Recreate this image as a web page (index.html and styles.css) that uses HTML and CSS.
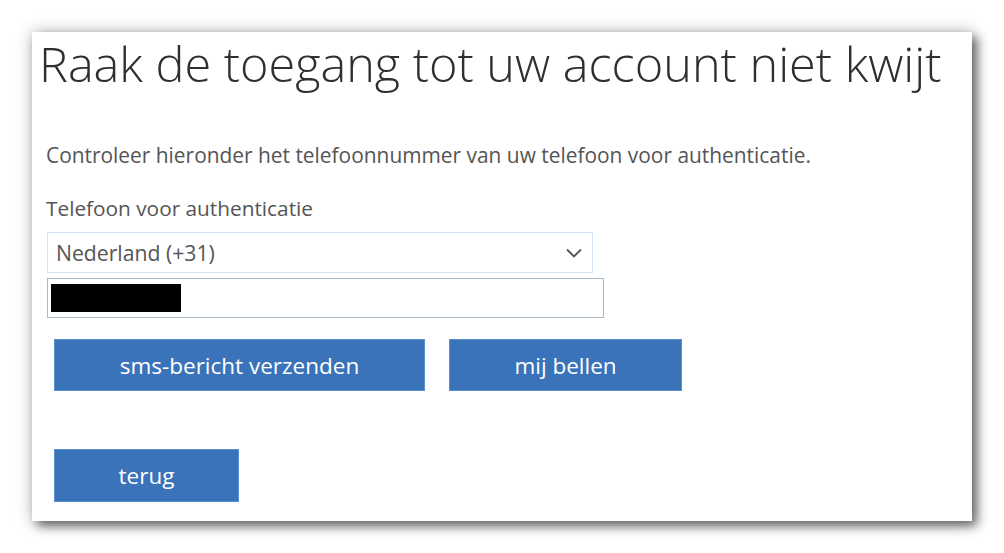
FILE: index.html
```html
<!DOCTYPE html>
<html lang="nl">
<head>
    <meta charset="UTF-8">
    <title>Raak de toegang tot uw account niet kwijt</title>
    <link rel="stylesheet" href="styles.css">
</head>
<body>
    <div class="card">
        <h1>Raak de toegang tot uw account niet kwijt</h1>
        <p class="intro">Controleer hieronder het telefoonnummer van uw telefoon voor authenticatie.</p>
        <label class="field-label" for="country">Telefoon voor authenticatie</label>
        <div class="select-box" id="country">
            <span>Nederland (+31)</span>
            <svg width="16" height="10" viewBox="0 0 16 10"><path d="M1 1.5 L8 8.5 L15 1.5" fill="none" stroke="#555" stroke-width="1.8"/></svg>
        </div>
        <div class="phone-input">
            <div class="redacted"></div>
        </div>
        <div class="actions">
            <button class="btn btn-sms">sms-bericht verzenden</button>
            <button class="btn btn-call">mij bellen</button>
        </div>
        <button class="btn btn-back">terug</button>
    </div>
</body>
</html>
```

FILE: styles.css
```css
body {
    margin: 0;
    min-height: 553px;
    background-color: #fff;
    font-family: "Open Sans", "Noto Sans", sans-serif;
}

.card {
    margin: 32px 0 0 32px;
    width: 940px;
    height: 489px;
    box-sizing: border-box;
    padding: 0 0 0 14px;
    background-color: #fff;
    box-shadow: 5px 5px 10px rgba(0, 0, 0, 0.55), 0 0 16px rgba(0, 0, 0, 0.25);
    display: flex;
    flex-direction: column;
    align-items: flex-start;
}

h1 {
    margin: 1px 0 0 -7px;
    font-weight: 300;
    font-size: 48.6px;
    line-height: 60px;
    color: #2f2f2f;
    white-space: nowrap;
}

.intro {
    margin: 49px 0 0 0;
    font-size: 20.9px;
    line-height: 26px;
    color: #555;
}

.field-label {
    margin-top: 27px;
    font-size: 20.8px;
    line-height: 26px;
    color: #555;
}

.select-box {
    margin: 11px 0 0 1px;
    width: 546px;
    height: 41px;
    box-sizing: border-box;
    border: 1px solid #d3e3f3;
    padding: 0 10px 0 8px;
    display: flex;
    align-items: center;
    justify-content: space-between;
    font-size: 21.2px;
    color: #555;
}

.phone-input {
    margin: 5px 0 0 1px;
    width: 557px;
    height: 40px;
    box-sizing: border-box;
    border: 1px solid #a8b9c9;
    padding: 5px 0 0 3px;
}

.redacted {
    width: 130px;
    height: 28px;
    background-color: #000;
}

.actions {
    margin: 21px 0 0 8px;
    display: flex;
    gap: 24px;
}

.btn {
    height: 52px;
    border: 1px solid #5b8fd0;
    background-color: #3a73ba;
    color: #fff;
    font-family: inherit;
    font-size: 22.5px;
    padding: 0;
}

.btn-sms {
    width: 371px;
}

.btn-call {
    width: 233px;
}

.btn-back {
    margin: 58px 0 0 8px;
    width: 185px;
    height: 53px;
}
```
